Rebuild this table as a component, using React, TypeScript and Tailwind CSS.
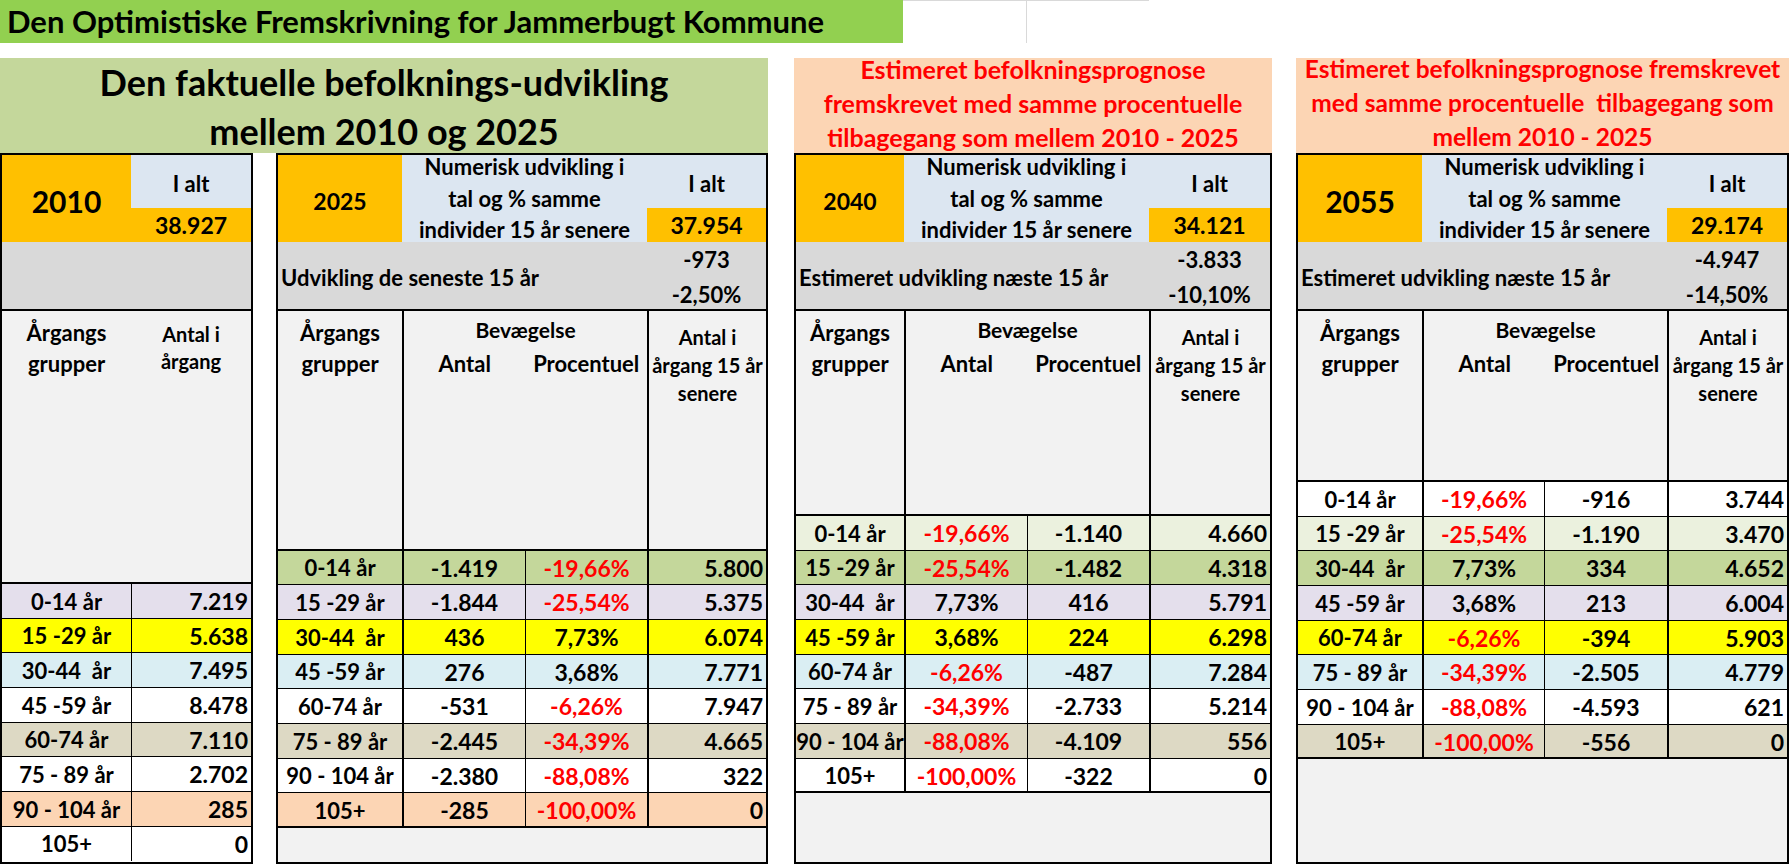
import React from 'react';

type R = { l: string; a: string; ar?: boolean; b: string; br?: boolean; c: string; bg: string };

const LG = 'bg-[#c4d79b]';
const VLG = 'bg-[#ebf1de]';
const LAV = 'bg-[#e4dfec]';
const YEL = 'bg-[#ffff00]';
const LB = 'bg-[#daeef3]';
const W = 'bg-white';
const TAN = 'bg-[#ddd9c4]';
const PCH = 'bg-[#fcd5b4]';

const labels = ['0-14 år', '15 -29 år', '30-44  år', '45 -59 år', '60-74 år', '75 - 89 år', '90 - 104 år', '105+'];

const rows2010: { l: string; v: string; bg: string }[] = [
  { l: labels[0], v: '7.219', bg: LAV },
  { l: labels[1], v: '5.638', bg: YEL },
  { l: labels[2], v: '7.495', bg: LB },
  { l: labels[3], v: '8.478', bg: W },
  { l: labels[4], v: '7.110', bg: TAN },
  { l: labels[5], v: '2.702', bg: W },
  { l: labels[6], v: '285', bg: PCH },
  { l: labels[7], v: '0', bg: W },
];

const rows2025: R[] = [
  { l: labels[0], a: '-1.419', b: '-19,66%', br: true, c: '5.800', bg: LG },
  { l: labels[1], a: '-1.844', b: '-25,54%', br: true, c: '5.375', bg: LAV },
  { l: labels[2], a: '436', b: '7,73%', c: '6.074', bg: YEL },
  { l: labels[3], a: '276', b: '3,68%', c: '7.771', bg: LB },
  { l: labels[4], a: '-531', b: '-6,26%', br: true, c: '7.947', bg: W },
  { l: labels[5], a: '-2.445', b: '-34,39%', br: true, c: '4.665', bg: TAN },
  { l: labels[6], a: '-2.380', b: '-88,08%', br: true, c: '322', bg: W },
  { l: labels[7], a: '-285', b: '-100,00%', br: true, c: '0', bg: PCH },
];

const rows2040: R[] = [
  { l: labels[0], a: '-19,66%', ar: true, b: '-1.140', c: '4.660', bg: VLG },
  { l: labels[1], a: '-25,54%', ar: true, b: '-1.482', c: '4.318', bg: LG },
  { l: labels[2], a: '7,73%', b: '416', c: '5.791', bg: LAV },
  { l: labels[3], a: '3,68%', b: '224', c: '6.298', bg: YEL },
  { l: labels[4], a: '-6,26%', ar: true, b: '-487', c: '7.284', bg: LB },
  { l: labels[5], a: '-34,39%', ar: true, b: '-2.733', c: '5.214', bg: W },
  { l: labels[6], a: '-88,08%', ar: true, b: '-4.109', c: '556', bg: TAN },
  { l: labels[7], a: '-100,00%', ar: true, b: '-322', c: '0', bg: W },
];

const rows2055: R[] = [
  { l: labels[0], a: '-19,66%', ar: true, b: '-916', c: '3.744', bg: W },
  { l: labels[1], a: '-25,54%', ar: true, b: '-1.190', c: '3.470', bg: VLG },
  { l: labels[2], a: '7,73%', b: '334', c: '4.652', bg: LG },
  { l: labels[3], a: '3,68%', b: '213', c: '6.004', bg: LAV },
  { l: labels[4], a: '-6,26%', ar: true, b: '-394', c: '5.903', bg: YEL },
  { l: labels[5], a: '-34,39%', ar: true, b: '-2.505', c: '4.779', bg: LB },
  { l: labels[6], a: '-88,08%', ar: true, b: '-4.593', c: '621', bg: W },
  { l: labels[7], a: '-100,00%', ar: true, b: '-556', c: '0', bg: TAN },
];

type T4Props = {
  w: string;
  grid: string;
  year: string;
  yearCls: string;
  total: string;
  grayLabel: string;
  g1: string;
  g2: string;
  secH: string;
  rows: R[];
};

function Table4({ w, grid, year, yearCls, total, grayLabel, g1, g2, secH, rows }: T4Props) {
  return (
    <div className={`flex flex-col border-2 border-black h-[711px] ${w}`}>
      <div className={`grid ${grid} grid-rows-[53px_34px]`}>
        <div className={`row-span-2 bg-[#ffc000] flex items-center justify-center ${yearCls}`}>{year}</div>
        <div className="col-span-2 row-span-2 bg-[#dce6f1] flex items-center justify-center text-center leading-[31.5px] whitespace-nowrap">
          <div>
            Numerisk udvikling i
            <br />
            tal og % samme
            <br />
            individer 15 år senere
          </div>
        </div>
        <div className="bg-[#dce6f1] flex items-center justify-center pt-[4px]">I alt</div>
        <div className="bg-[#ffc000] flex items-center justify-center text-[23px]">{total}</div>
      </div>
      <div className={`grid ${grid} h-[69px] bg-[#d9d9d9] border-b-2 border-black`}>
        <div className="col-span-3 flex items-center pl-[3px] whitespace-nowrap">{grayLabel}</div>
        <div className="flex flex-col items-center justify-center leading-[35px]">
          <span>{g1}</span>
          <span>{g2}</span>
        </div>
      </div>
      <div className={`grid ${grid} ${secH} bg-[#f2f2f2] border-b-2 border-black`}>
        <div className="text-center pt-[6px] leading-[31px]">
          Årgangs
          <br />
          grupper
        </div>
        <div className="col-span-2 border-l-2 border-black">
          <div className="text-center text-[21px] leading-[30px] pt-[4px]">Bevægelse</div>
          <div className="grid grid-cols-2 text-center leading-[38px] whitespace-nowrap">
            <span>Antal</span>
            <span>Procentuel</span>
          </div>
        </div>
        <div className="border-l-2 border-black text-center text-[20px] leading-[28px] pt-[12px] whitespace-nowrap">
          Antal i
          <br />
          årgang 15 år
          <br />
          senere
        </div>
      </div>
      {rows.map((r, i) => (
        <div
          key={i}
          className={`grid ${grid} h-[34.66px] shrink-0 ${i === rows.length - 1 ? 'border-b-2' : 'border-b'} border-black ${r.bg}`}
        >
          <div className="flex items-center justify-center whitespace-pre">{r.l}</div>
          <div className={`border-l-2 border-black flex items-center justify-center text-[23px] ${r.ar ? 'text-[#ff0000]' : ''}`}>{r.a}</div>
          <div className={`border-l border-black flex items-center justify-center text-[23px] ${r.br ? 'text-[#ff0000]' : ''}`}>{r.b}</div>
          <div className="border-l-2 border-black flex items-center justify-end pr-[3px] text-[23px]">{r.c}</div>
        </div>
      ))}
      <div className="flex-1 bg-[#f2f2f2]" />
    </div>
  );
}

function Table2010() {
  return (
    <div className="flex flex-col border-2 border-black h-[711px] w-[253px]">
      <div className="grid grid-cols-[129px_120px] grid-rows-[53px_34px]">
        <div className="row-span-2 bg-[#ffc000] flex items-center justify-center text-[30px] pt-[6px]">2010</div>
        <div className="bg-[#dce6f1] flex items-center justify-center pt-[4px]">I alt</div>
        <div className="bg-[#ffc000] flex items-center justify-center text-[23px]">38.927</div>
      </div>
      <div className="h-[69px] bg-[#d9d9d9] border-b-2 border-black" />
      <div className="grid grid-cols-[129px_120px] h-[273px] bg-[#f2f2f2] border-b-2 border-black">
        <div className="text-center pt-[6px] leading-[31px]">
          Årgangs
          <br />
          grupper
        </div>
        <div className="text-center pt-[10px] leading-[27px] text-[20px]">
          Antal i
          <br />
          årgang
        </div>
      </div>
      {rows2010.map((r, i) => (
        <div
          key={i}
          className={`grid grid-cols-[129px_120px] h-[34.66px] shrink-0 ${i === rows2010.length - 1 ? '' : 'border-b border-black'} ${r.bg}`}
        >
          <div className="flex items-center justify-center whitespace-pre">{r.l}</div>
          <div className="border-l border-black flex items-center justify-end pr-[3px] text-[23px]">{r.v}</div>
        </div>
      ))}
      <div className="flex-1" />
    </div>
  );
}

export default function App() {
  return (
    <div className="w-[1791px] h-[865px] bg-white overflow-hidden font-['Lato',sans-serif] font-bold text-[22px] text-black">
      <div className="flex h-[43px]">
        <div className="w-[903px] bg-[#92d050] flex items-center pl-[7px] text-[31px] whitespace-nowrap">
          Den Optimistiske Fremskrivning for Jammerbugt Kommune
        </div>
        <div className="w-[124px] border-t border-r border-[#d9d9d9]" />
        <div className="w-[122px] border-t border-[#d9d9d9]" />
      </div>
      <div className="flex items-start mt-[15px]">
        <div className="w-[768px] flex flex-col">
          <div className="h-[95px] bg-[#c4d79b] flex flex-col items-center text-[36px] leading-[49px] whitespace-nowrap">
            <span>Den faktuelle befolknings-udvikling</span>
            <span>mellem 2010 og 2025</span>
          </div>
          <div className="flex gap-[23px] relative">
            <Table2010 />
            <Table4
              w="w-[492px]"
              grid="grid-cols-[124px_123px_122px_119px]"
              year="2025"
              yearCls="text-[23px] pt-[6px]"
              total="37.954"
              grayLabel="Udvikling de seneste 15 år"
              g1="-973"
              g2="-2,50%"
              secH="h-[239.7px]"
              rows={rows2025}
            />
          </div>
        </div>
        <div className="w-[478px] ml-[26px] flex flex-col">
          <div className="h-[95px] bg-[#fcd5b4] flex items-center justify-center text-center text-[25px] leading-[34px] text-[#ff0000] whitespace-nowrap pb-[5px]">
            <div>
              Estimeret befolkningsprognose
              <br />
              fremskrevet med samme procentuelle
              <br />
              tilbagegang som mellem 2010 - 2025
            </div>
          </div>
          <Table4
            w="w-[478px]"
            grid="grid-cols-[108px_123px_122px_121px]"
            year="2040"
            yearCls="text-[23px] pt-[6px]"
            total="34.121"
            grayLabel="Estimeret udvikling næste 15 år"
            g1="-3.833"
            g2="-10,10%"
            secH="h-[205px]"
            rows={rows2040}
          />
        </div>
        <div className="w-[493px] ml-[24px] flex flex-col">
          <div className="h-[95px] bg-[#fcd5b4] flex items-center justify-center text-center text-[24.5px] leading-[34px] text-[#ff0000] whitespace-pre pb-[5px]">
            <div>
              {'Estimeret befolkningsprognose fremskrevet'}
              <br />
              {'med samme procentuelle  tilbagegang som'}
              <br />
              {'mellem 2010 - 2025'}
            </div>
          </div>
          <Table4
            w="w-[493px]"
            grid="grid-cols-[124px_122px_123px_120px]"
            year="2055"
            yearCls="text-[30px] pt-[6px]"
            total="29.174"
            grayLabel="Estimeret udvikling næste 15 år"
            g1="-4.947"
            g2="-14,50%"
            secH="h-[171px]"
            rows={rows2055}
          />
        </div>
      </div>
    </div>
  );
}
